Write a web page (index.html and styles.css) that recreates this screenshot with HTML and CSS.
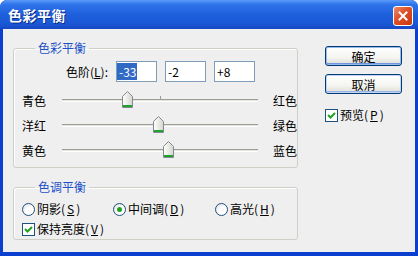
FILE: index.html
```html
<!DOCTYPE html>
<html lang="zh-CN">
<head>
    <meta charset="UTF-8">
    <title>色彩平衡</title>
    <link rel="stylesheet" href="styles.css">
</head>
<body>
    <div class="window">
        <div class="titlebar">
            <span class="title">色彩平衡</span>
            <button class="close" aria-label="关闭">
                <svg width="10" height="10" viewBox="0 0 10 10"><path d="M1.5 1.5 L8.5 8.5 M8.5 1.5 L1.5 8.5" stroke="#fff" stroke-width="2" stroke-linecap="square"/></svg>
            </button>
        </div>
        <div class="content">
            <div class="left">
                <fieldset class="group balance">
                    <legend>色彩平衡</legend>
                    <div class="levels">
                        <label class="levels-label">色阶(<u>L</u>):</label>
                        <input class="num selected" value="-33">
                        <input class="num" value="-2">
                        <input class="num" value="+8">
                    </div>
                    <!-- 三个滑块，位置按 -100..100 计算 -->
                    <div class="slider-row">
                        <span class="side">青色</span>
                        <div class="track mid">
                            <span class="thumb" style="left: 33%"></span>
                        </div>
                        <span class="side side-end">红色</span>
                    </div>
                    <div class="slider-row">
                        <span class="side">洋红</span>
                        <div class="track">
                            <span class="thumb" style="left: 49%"></span>
                        </div>
                        <span class="side side-end">绿色</span>
                    </div>
                    <div class="slider-row">
                        <span class="side">黄色</span>
                        <div class="track">
                            <span class="thumb" style="left: 54%"></span>
                        </div>
                        <span class="side side-end">蓝色</span>
                    </div>
                </fieldset>

                <fieldset class="group tone">
                    <legend>色调平衡</legend>
                    <div class="radios">
                        <label class="opt shadow"><span class="radio"></span>阴影(<u>S</u>)</label>
                        <label class="opt midtone"><span class="radio on"></span>中间调(<u>D</u>)</label>
                        <label class="opt"><span class="radio"></span>高光(<u>H</u>)</label>
                    </div>
                    <label class="opt keep"><span class="check on"></span>保持亮度(<u>V</u>)</label>
                </fieldset>
            </div>

            <div class="actions">
                <button class="btn ok">确定</button>
                <button class="btn">取消</button>
                <label class="opt preview"><span class="check on"></span>预览(<u>P</u>)</label>
            </div>
        </div>
    </div>
</body>
</html>
```

FILE: styles.css
```css
* {
    box-sizing: border-box;
}

body {
    margin: 0;
    font-family: "Noto Sans CJK SC", "Liberation Sans", sans-serif;
    font-size: 12px;
    color: #000;
    background: #fff;
}

.window {
    width: 418px;
    height: 256px;
    display: flex;
    flex-direction: column;
    background: #0b3fcf;
    border-radius: 7px 7px 0 0;
    overflow: hidden;
}

.titlebar {
    height: 29px;
    flex: none;
    display: flex;
    align-items: center;
    padding: 0 5px 0 8px;
    background: linear-gradient(#5a9af6 0%, #2f74ea 15%, #1e5fdc 50%, #1a58d6 80%, #1548c4 100%);
}

.title {
    flex: 1;
    color: #fff;
    font-weight: bold;
    font-size: 14px;
    letter-spacing: 0.5px;
    text-shadow: 1px 1px 0 #0a2a8a;
}

.close {
    width: 20px;
    height: 20px;
    padding: 0;
    margin-top: 2px;
    display: flex;
    align-items: center;
    justify-content: center;
    border: 1px solid #fff;
    border-radius: 3px;
    background: linear-gradient(135deg, #ec8a6a 0%, #dd4f26 45%, #c8380f 100%);
}

.content {
    flex: 1;
    display: flex;
    margin: 0 3px 4px 3px;
    padding: 11px 0 0 10px;
    background: #efefef;
}

.left {
    width: 285px;
    flex: none;
    display: flex;
    flex-direction: column;
    gap: 11px;
}

.group {
    width: 285px;
    min-width: 0;
    margin: 0;
    padding: 0 0 0 8px;
    border: 1px solid #cfcfc8;
    border-radius: 3px;
    box-shadow: inset 1px 1px 0 #fff;
}

.group legend {
    margin-left: 13px;
    padding: 0 3px;
    line-height: 16px;
    color: #1d4fc8;
}

.balance {
    height: 128px;
}

.levels {
    display: flex;
    align-items: center;
    gap: 8px;
    margin-top: 5px;
}

.levels-label {
    width: 86px;
    text-align: right;
}

.num {
    width: 41px;
    height: 21px;
    border: 1px solid #7f9db9;
    padding: 0 2px;
    font: inherit;
    background: #fff;
}

.num.selected {
    color: #fff;
    background: #fff linear-gradient(#316ac5, #316ac5) no-repeat 0 1px / 20px 17px;
}

.slider-row {
    display: flex;
    align-items: center;
    height: 25px;
}

.levels + .slider-row {
    margin-top: 6px;
}

.side {
    flex: none;
    width: 40px;
    white-space: nowrap;
}

.side-end {
    width: auto;
    margin-left: 15px;
}

.track {
    position: relative;
    flex: none;
    width: 196px;
    height: 3px;
    border-top: 1px solid #9d9d95;
    border-bottom: 1px solid #fff;
    background: #e4e4de;
}

.track.mid::after {
    content: "";
    position: absolute;
    left: 50%;
    top: -4px;
    width: 1px;
    height: 3px;
    background: #9d9d95;
}

.thumb {
    position: absolute;
    top: -9px;
    width: 11px;
    height: 17px;
    margin-left: -5px;
    background: url("data:image/svg+xml,%3Csvg xmlns='http://www.w3.org/2000/svg' width='11' height='17'%3E%3Cdefs%3E%3ClinearGradient id='g' x1='0' x2='1'%3E%3Cstop offset='0' stop-color='%23fff'/%3E%3Cstop offset='1' stop-color='%23d6d6ce'/%3E%3C/linearGradient%3E%3C/defs%3E%3Cpath d='M0.5 5.5 L5.5 0.5 L10.5 5.5 V16.5 H0.5 Z' fill='url(%23g)' stroke='%237e8a96'/%3E%3Crect x='1' y='14' width='9' height='2' fill='%2321a32b'/%3E%3C/svg%3E") no-repeat;
}

.tone {
    height: 61px;
}

.radios {
    display: flex;
    align-items: center;
    margin-top: 5px;
}

.opt {
    display: flex;
    align-items: center;
    gap: 2px;
    line-height: 18px;
    white-space: nowrap;
}

.shadow {
    width: 91px;
}

.midtone {
    width: 102px;
}

.keep {
    margin-top: 2px;
}

.radio {
    width: 13px;
    height: 13px;
    border: 1px solid #1c5180;
    border-radius: 50%;
    background: radial-gradient(circle at 70% 70%, #fff 0, #fff 40%, #dcdad5 100%);
    display: flex;
    align-items: center;
    justify-content: center;
}

.radio.on::after {
    content: "";
    width: 5px;
    height: 5px;
    border-radius: 50%;
    background: #21a121;
}

.check {
    width: 13px;
    height: 13px;
    border: 1px solid #1c5180;
    background: #fff;
}

.check.on {
    background: #fff url("data:image/svg+xml,%3Csvg xmlns='http://www.w3.org/2000/svg' width='11' height='11'%3E%3Cpath d='M2 5 L4.5 7.5 L9 3' fill='none' stroke='%2321a121' stroke-width='2'/%3E%3C/svg%3E") no-repeat;
}

.actions {
    display: flex;
    flex-direction: column;
    align-items: flex-start;
    padding: 6px 0 0 27px;
}

.btn {
    width: 77px;
    height: 20px;
    margin-bottom: 8px;
    padding: 0;
    font: inherit;
    color: #000;
    border: 1px solid #003c74;
    border-radius: 3px;
    background: linear-gradient(#fff 0%, #f4f4f0 60%, #dcdcd4 100%);
    box-shadow: inset 0 0 0 1px #c2d4f6, inset 0 -2px 0 #98b4e8;
}

.btn.ok {
    box-shadow: inset 0 0 0 1px #9ab8f0, inset 0 -2px 0 #6f94e0;
}

.preview {
    margin-top: 4px;
}
```
